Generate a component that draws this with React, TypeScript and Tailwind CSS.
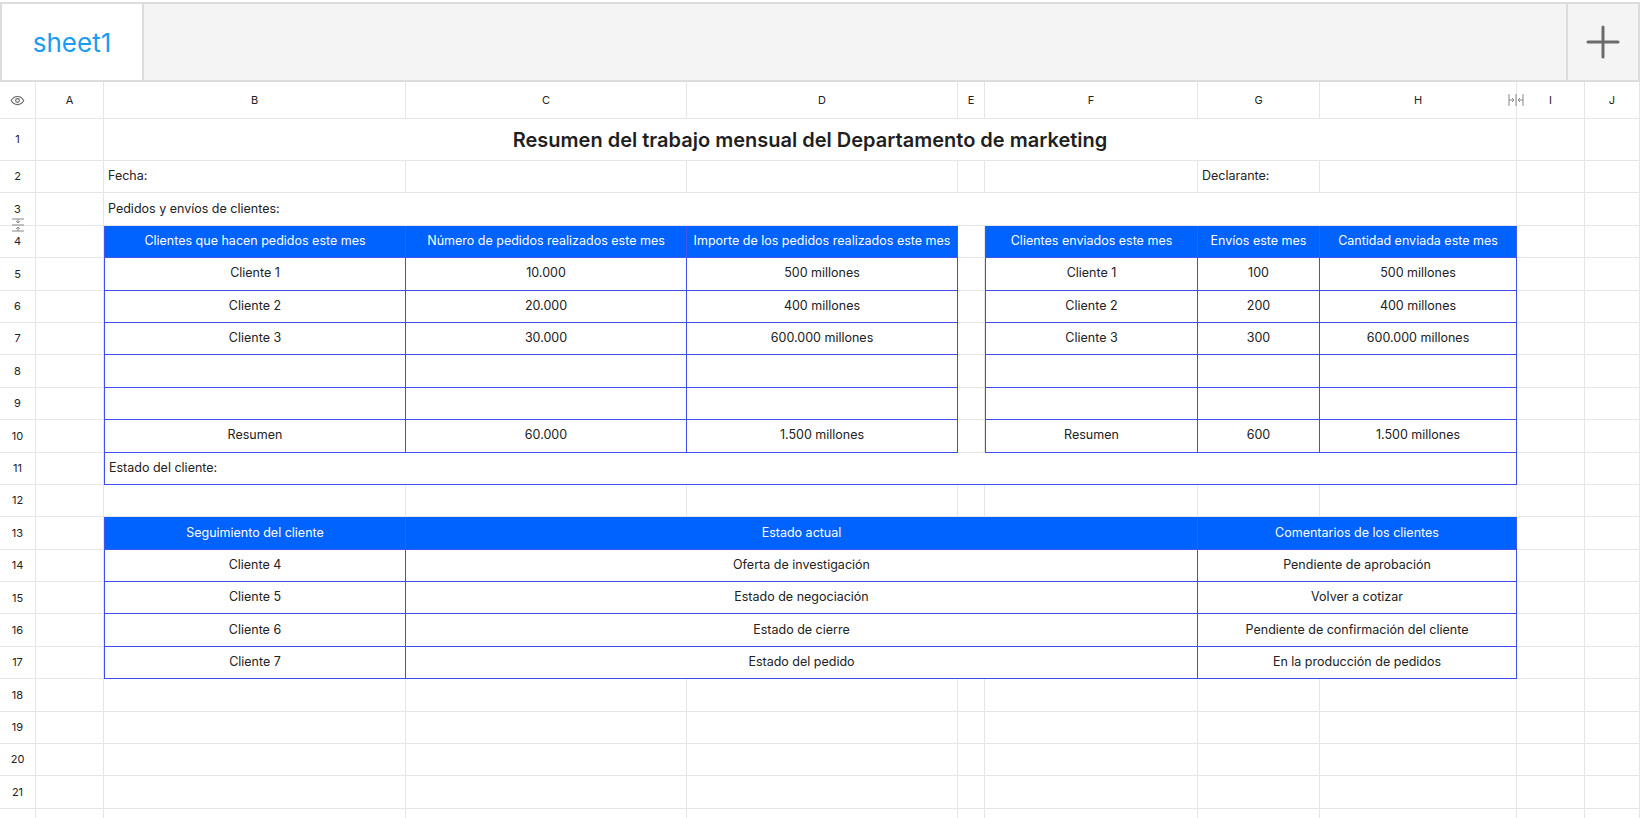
import React from "react";

type Kind = "plain" | "head" | "box" | "title" | "label";
type Cell = { span?: number; text?: string; kind?: Kind; left?: boolean; align?: "left" | "center" };

const spanCls: Record<number, string> = {
  1: "col-span-1",
  2: "col-span-2",
  4: "col-span-4",
  7: "col-span-7",
};

const E = (n = 1): Cell[] => Array.from({ length: n }, () => ({}));

function orderRow(cells: string[], kind: Kind): Cell[] {
  // cells for B,C,D,(E),F,G,H
  return [
    {},
    { text: cells[0], kind, left: true },
    { text: cells[1], kind },
    { text: cells[2], kind },
    {},
    { text: cells[3], kind, left: true },
    { text: cells[4], kind },
    { text: cells[5], kind },
    {},
    {},
  ];
}

function followRow(a: string, b: string, c: string, kind: Kind): Cell[] {
  return [
    {},
    { text: a, kind, left: true },
    { text: b, kind, span: 4 },
    { text: c, kind, span: 2 },
    {},
    {},
  ];
}

const rows: Cell[][] = [
  [{}, { span: 7, text: "Resumen del trabajo mensual del Departamento de marketing", kind: "title" }, {}, {}],
  [{}, { text: "Fecha:", kind: "label" }, ...E(4), { text: "Declarante:", kind: "label" }, ...E(3)],
  [{}, { span: 7, text: "Pedidos y envíos de clientes:", kind: "label" }, {}, {}],
  orderRow(
    [
      "Clientes que hacen pedidos este mes",
      "Número de pedidos realizados este mes",
      "Importe de los pedidos realizados este mes",
      "Clientes enviados este mes",
      "Envíos este mes",
      "Cantidad enviada este mes",
    ],
    "head"
  ),
  orderRow(["Cliente 1", "10.000", "500 millones", "Cliente 1", "100", "500 millones"], "box"),
  orderRow(["Cliente 2", "20.000", "400 millones", "Cliente 2", "200", "400 millones"], "box"),
  orderRow(["Cliente 3", "30.000", "600.000 millones", "Cliente 3", "300", "600.000 millones"], "box"),
  orderRow(["", "", "", "", "", ""], "box"),
  orderRow(["", "", "", "", "", ""], "box"),
  orderRow(["Resumen", "60.000", "1.500 millones", "Resumen", "600", "1.500 millones"], "box"),
  [{}, { span: 7, text: "Estado del cliente:", kind: "box", left: true, align: "left" }, {}, {}],
  E(10),
  followRow("Seguimiento del cliente", "Estado actual", "Comentarios de los clientes", "head"),
  followRow("Cliente 4", "Oferta de investigación", "Pendiente de aprobación", "box"),
  followRow("Cliente 5", "Estado de negociación", "Volver a cotizar", "box"),
  followRow("Cliente 6", "Estado de cierre", "Pendiente de confirmación del cliente", "box"),
  followRow("Cliente 7", "Estado del pedido", "En la producción de pedidos", "box"),
  E(10),
  E(10),
  E(10),
  E(10),
  E(10),
];

const cols = ["A", "B", "C", "D", "E", "F", "G", "H", "I", "J"];

function renderCell(c: Cell, key: string) {
  const kind = c.kind ?? "plain";
  const span = spanCls[c.span ?? 1];
  let cls = "flex items-center min-w-0 overflow-visible whitespace-nowrap text-[12.5px] ";
  if (kind === "head") {
    cls += "justify-center bg-[#0062ff] text-white border-r border-b border-[#4455ee] ";
    if (c.left) cls += "border-l ";
  } else if (kind === "box") {
    cls += (c.align === "left" ? "justify-start pl-1 " : "justify-center ") + "text-[#222] border-r border-b border-[#3d4ff0] ";
    if (c.left) cls += "border-l ";
  } else if (kind === "title") {
    cls += "justify-center text-[20px] font-semibold text-[#1f1f1f] border-r border-b border-[#e6e6e6] ";
  } else if (kind === "label") {
    cls += "justify-start pl-1 text-[#222] border-r border-b border-[#e6e6e6] ";
  } else {
    cls += "border-r border-b border-[#e6e6e6] ";
  }
  return (
    <div key={key} className={cls + span}>
      {c.text}
    </div>
  );
}

export default function App() {
  return (
    <div className="w-[1640px] h-[818px] overflow-hidden bg-white" style={{ fontFamily: "Inter, 'Noto Sans', sans-serif" }}>
      {/* sheet tabs */}
      <div className="flex h-[82px] pt-[2px] bg-white">
        <div className="flex flex-1 bg-[#f4f4f4] border-2 border-[#dcdcdc]">
          <div className="w-[142px] flex items-center justify-center bg-white border-r-2 border-[#dcdcdc] text-[26px] text-[#1a9cf0]">
            sheet1
          </div>
          <div className="flex-1" />
          <div className="w-[72px] flex items-center justify-center border-l-2 border-[#dcdcdc]">
            <svg width="34" height="34" viewBox="0 0 34 34" stroke="#6b6b6b" strokeWidth="3" strokeLinecap="round">
              <path d="M17 2v30M2 17h30" />
            </svg>
          </div>
        </div>
      </div>

      {/* grid */}
      <div className="grid grid-cols-[36px_68px_302px_281px_271px_27px_213px_122px_197px_68px_1fr] grid-rows-[37px_42px] auto-rows-[32.4px]">
        <div className="flex items-center justify-center border-r border-b border-[#e6e6e6]">
          <svg width="15" height="15" viewBox="0 0 24 24" fill="none" stroke="#666" strokeWidth="1.8">
            <path d="M2 12s3.5-6.5 10-6.5S22 12 22 12s-3.5 6.5-10 6.5S2 12 2 12z" />
            <circle cx="12" cy="12" r="3" />
          </svg>
        </div>
        {cols.map((c) => (
          <div key={c} className="relative flex items-center justify-center text-[11px] text-[#222] border-r border-b border-[#e6e6e6]">
            {c}
            {c === "H" && (
              <svg className="absolute right-[-8px] top-[11px]" width="16" height="14" viewBox="0 0 16 14" fill="none" stroke="#888" strokeWidth="1">
                <path d="M8 1v12M1 7h5M4 5l2 2-2 2M15 7h-5M12 5l-2 2 2 2M1 1v12M15 1v12" />
              </svg>
            )}
          </div>
        ))}
        {rows.map((r, i) => (
          <React.Fragment key={i}>
            <div className="relative flex items-center justify-center text-[11px] text-[#222] border-r border-b border-[#e6e6e6]">
              {i + 1}
              {i === 2 && (
                <svg className="absolute left-[11px] bottom-[-7px]" width="14" height="14" viewBox="0 0 14 14" fill="none" stroke="#888" strokeWidth="1">
                  <path d="M1 7h12M7 1v4M5 3l2 2 2-2M7 13V9M5 11l2-2 2 2M1 1h12M1 13h12" />
                </svg>
              )}
            </div>
            {r.map((c, j) => renderCell(c, `${i}-${j}`))}
          </React.Fragment>
        ))}
      </div>
    </div>
  );
}
